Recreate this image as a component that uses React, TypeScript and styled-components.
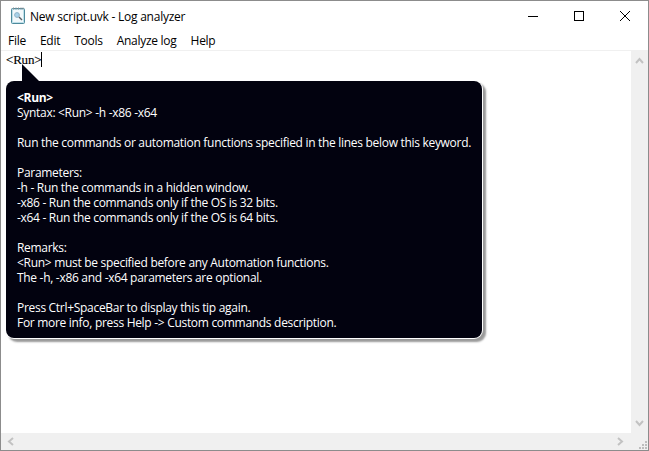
import * as React from "react";
import styled, { createGlobalStyle } from "styled-components";

const GlobalStyle = createGlobalStyle`
  html, body {
    margin: 0;
    padding: 0;
    background: #fff;
  }
`;

const Window = styled.div`
  width: 649px;
  height: 451px;
  box-sizing: border-box;
  border: 1px solid #8c8c8c;
  display: flex;
  flex-direction: column;
  background: #fff;
  font-family: "Open Sans", "Noto Sans", sans-serif;
  font-size: 12px;
  color: #000;
  overflow: hidden;
`;

const TitleBar = styled.div`
  height: 29px;
  display: flex;
  align-items: center;
  padding-left: 10px;
  gap: 5px;
  flex-shrink: 0;
`;

const Title = styled.div`
  flex: 1;
  letter-spacing: -0.24px;
  padding-top: 1px;
`;

const WinButtons = styled.div`
  display: flex;
  align-self: stretch;
`;

const WinButton = styled.div`
  width: 46px;
  display: flex;
  align-items: center;
  justify-content: center;
`;

const MenuBar = styled.div`
  height: 20px;
  display: flex;
  align-items: center;
  padding: 1px 0 0 7px;
  box-sizing: border-box;
  gap: 14px;
  flex-shrink: 0;
`;

const MenuItem = styled.div`
  letter-spacing: -0.27px;
`;

const Body = styled.div`
  position: relative;
  flex: 1;
  display: grid;
  grid-template-columns: 1fr 17px;
  grid-template-rows: 1fr 17px;
  border-top: 1px solid #f0f0f0;
  min-height: 0;
`;

const Editor = styled.div`
  padding: 1px 0 0 5px;
  font-family: "Liberation Serif", serif;
  font-size: 13px;
  line-height: 15px;
  letter-spacing: -0.2px;
  -webkit-text-stroke: 0.15px #000;
  display: flex;
  align-items: flex-start;
`;

const Caret = styled.span`
  width: 1px;
  height: 15px;
  background: #000;
`;

const VScroll = styled.div`
  background: #f0f0f0;
  display: flex;
  flex-direction: column;
  justify-content: space-between;
  align-items: center;
  padding: 6px 0;
`;

const HScroll = styled.div`
  background: #f0f0f0;
  display: flex;
  justify-content: space-between;
  align-items: center;
  padding: 0 6px 0 5px;
`;

const Grip = styled.div`
  background: #f0f0f0;
  display: flex;
  align-items: flex-end;
  justify-content: flex-end;
`;

const Tip = styled.div`
  position: absolute;
  left: 5px;
  top: 30px;
  width: 476px;
  height: 257px;
  box-sizing: border-box;
  background: #02020f;
  color: #fff;
  border-radius: 8px;
  box-shadow: 0 0 0 1px #fff, 3px 3px 2px 1px #999;
  padding: 9px 11px;
  line-height: 15px;
  letter-spacing: -0.3px;
`;

const TipArrow = styled.svg`
  position: absolute;
  left: 16px;
  top: -17px;
`;

const TipLine = styled.div<{ $bold?: boolean }>`
  height: 15px;
  white-space: pre;
  font-weight: ${(p) => (p.$bold ? 700 : 400)};
`;

const tipLines = [
  "Syntax: <Run> -h -x86 -x64",
  "",
  "Run the commands or automation functions specified in the lines below this keyword.",
  "",
  "Parameters:",
  "-h - Run the commands in a hidden window.",
  "-x86 - Run the commands only if the OS is 32 bits.",
  "-x64 - Run the commands only if the OS is 64 bits.",
  "",
  "Remarks:",
  "<Run> must be specified before any Automation functions.",
  "The -h, -x86 and -x64 parameters are optional.",
  "",
  "Press Ctrl+SpaceBar to display this tip again.",
  "For more info, press Help -> Custom commands description.",
];

const menus = ["File", "Edit", "Tools", "Analyze log", "Help"];

const NotepadIcon = () => (
  <svg width="14" height="17" viewBox="0 0 14 17">
    <rect x="0.5" y="1.5" width="13" height="15" rx="1" fill="#bfe0ea" stroke="#4d8a9c" />
    <rect x="2" y="3" width="10" height="12" fill="#f2f8fb" />
    <path d="M2.5 0.5v2M5 0.5v2M7.5 0.5v2M10 0.5v2M12 0.5v2" stroke="#8a8f94" />
    <circle cx="6" cy="8" r="2.4" fill="#a9d2ea" stroke="#8fb4c8" />
    <path d="M8 10l3 3" stroke="#5b6066" strokeWidth="1.4" />
  </svg>
);

const Chevron = ({ dir }: { dir: "up" | "down" | "left" | "right" }) => {
  const rotate = { up: 0, right: 90, down: 180, left: 270 }[dir];
  return (
    <svg width="9" height="7" viewBox="0 0 9 7" style={{ transform: `rotate(${rotate}deg)` }}>
      <path d="M1 6l3.5-4L8 6" fill="none" stroke="#c2c2c2" strokeWidth="2" />
    </svg>
  );
};

const App = () => (
  <>
    <GlobalStyle />
    <Window>
      <TitleBar>
        <NotepadIcon />
        <Title>New script.uvk - Log analyzer</Title>
        <WinButtons>
          <WinButton>
            <svg width="10" height="10" viewBox="0 0 10 10">
              <path d="M0 5.5h10" stroke="#000" />
            </svg>
          </WinButton>
          <WinButton>
            <svg width="10" height="10" viewBox="0 0 10 10">
              <rect x="0.5" y="0.5" width="9" height="9" fill="none" stroke="#000" />
            </svg>
          </WinButton>
          <WinButton>
            <svg width="10" height="10" viewBox="0 0 10 10">
              <path d="M0 0l10 10M10 0L0 10" stroke="#000" />
            </svg>
          </WinButton>
        </WinButtons>
      </TitleBar>
      <MenuBar>
        {menus.map((m) => (
          <MenuItem key={m}>{m}</MenuItem>
        ))}
      </MenuBar>
      <Body>
        <Editor>
          &lt;Run&gt;
          <Caret />
        </Editor>
        <VScroll>
          <Chevron dir="up" />
          <Chevron dir="down" />
        </VScroll>
        <HScroll>
          <Chevron dir="left" />
          <Chevron dir="right" />
        </HScroll>
        <Grip>
          <svg width="9" height="9" viewBox="0 0 9 9">
            <path d="M6 0h2v2H6zM3 3h2v2H3zM6 3h2v2H6zM0 6h2v2H0zM3 6h2v2H3zM6 6h2v2H6z" fill="#bdbdbd" />
          </svg>
        </Grip>
        <Tip>
          <TipArrow width="19" height="18" viewBox="0 0 19 18">
            <path d="M0 0L18 18H0z" fill="#02020f" />
          </TipArrow>
          <TipLine $bold>&lt;Run&gt;</TipLine>
          {tipLines.map((line, i) => (
            <TipLine key={i}>{line}</TipLine>
          ))}
        </Tip>
      </Body>
    </Window>
  </>
);

export default App;
